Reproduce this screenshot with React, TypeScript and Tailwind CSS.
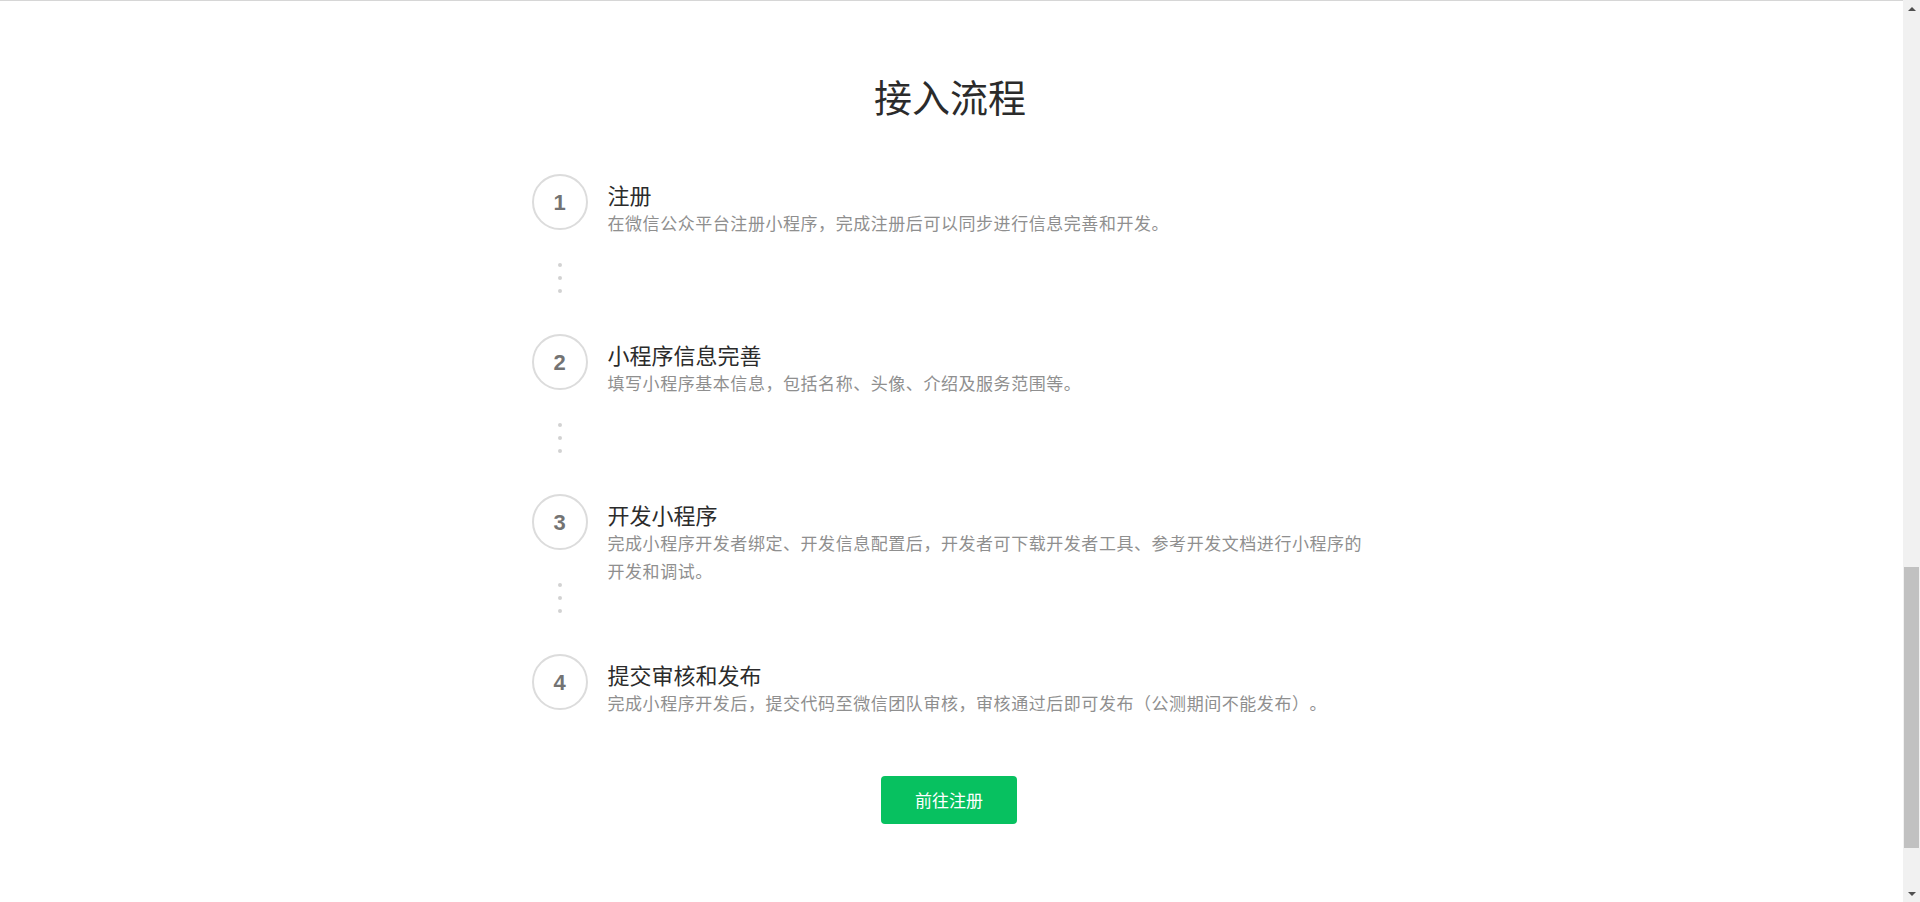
import React from "react";

const steps = [
  {
    n: "1",
    title: "注册",
    desc: "在微信公众平台注册小程序，完成注册后可以同步进行信息完善和开发。",
  },
  {
    n: "2",
    title: "小程序信息完善",
    desc: "填写小程序基本信息，包括名称、头像、介绍及服务范围等。",
  },
  {
    n: "3",
    title: "开发小程序",
    desc: "完成小程序开发者绑定、开发信息配置后，开发者可下载开发者工具、参考开发文档进行小程序的开发和调试。",
  },
  {
    n: "4",
    title: "提交审核和发布",
    desc: "完成小程序开发后，提交代码至微信团队审核，审核通过后即可发布（公测期间不能发布）。",
  },
];

const cjk = "font-['Noto_Sans_CJK_SC','Noto_Sans',sans-serif] [text-spacing-trim:space-all]";

export default function App() {
  return (
    <div className="flex h-[902px] w-full overflow-hidden bg-white">
      <main className={`flex-1 border-t border-[#d6d6d6] pr-[5px] ${cjk}`}>
        <h1 className="pt-[66px] pl-[2px] text-center text-[38px] leading-[57px] font-normal text-[#2b2b2b]">
          接入流程
        </h1>
        <div className="mx-auto mt-[50px] w-[845px] pl-[5px]">
          {steps.map((s, i) => {
            const last = i === steps.length - 1;
            return (
              <div key={s.n} className={`flex gap-5 ${last ? "" : "h-[160px]"}`}>
                <div className="flex w-[56px] shrink-0 flex-col items-center">
                  <div className="flex h-[56px] w-[56px] items-center justify-center rounded-full border-2 border-[#dcdcdc]">
                    <span className="font-['Liberation_Sans',Arial,sans-serif] text-[22px] font-bold text-[#737373]">
                      {s.n}
                    </span>
                  </div>
                  {!last && (
                    <div className="flex h-[104px] flex-col items-center justify-center gap-[9px] pb-2">
                      <span className="h-1 w-1 rounded-full bg-[#d2d2d2]" />
                      <span className="h-1 w-1 rounded-full bg-[#d2d2d2]" />
                      <span className="h-1 w-1 rounded-full bg-[#d2d2d2]" />
                    </div>
                  )}
                </div>
                <div className="pt-[5px]">
                  <div className="text-[22px] leading-[30px] text-[#2b2b2b]">{s.title}</div>
                  <p className="max-w-[764px] text-[17px] leading-[28px] tracking-[0.55px] text-[#8f8f8f]">
                    {s.desc}
                  </p>
                </div>
              </div>
            );
          })}
        </div>
        <div className="mt-[59px] flex justify-center">
          <button className="h-[48px] w-[136px] rounded-[4px] bg-[#07c160] text-[17px] text-white">
            前往注册
          </button>
        </div>
      </main>
      <div className="flex w-[17px] shrink-0 flex-col bg-[#f1f1f1]">
        <div className="flex h-[17px] items-center justify-center">
          <span className="h-0 w-0 border-x-[4px] border-b-[4px] border-x-transparent border-b-[#505050]" />
        </div>
        <div className="flex-1">
          <div className="mx-[1px] mt-[550px] h-[281px] bg-[#c1c1c1]" />
        </div>
        <div className="flex h-[17px] items-center justify-center">
          <span className="h-0 w-0 border-x-[4px] border-t-[4px] border-x-transparent border-t-[#505050]" />
        </div>
      </div>
    </div>
  );
}
